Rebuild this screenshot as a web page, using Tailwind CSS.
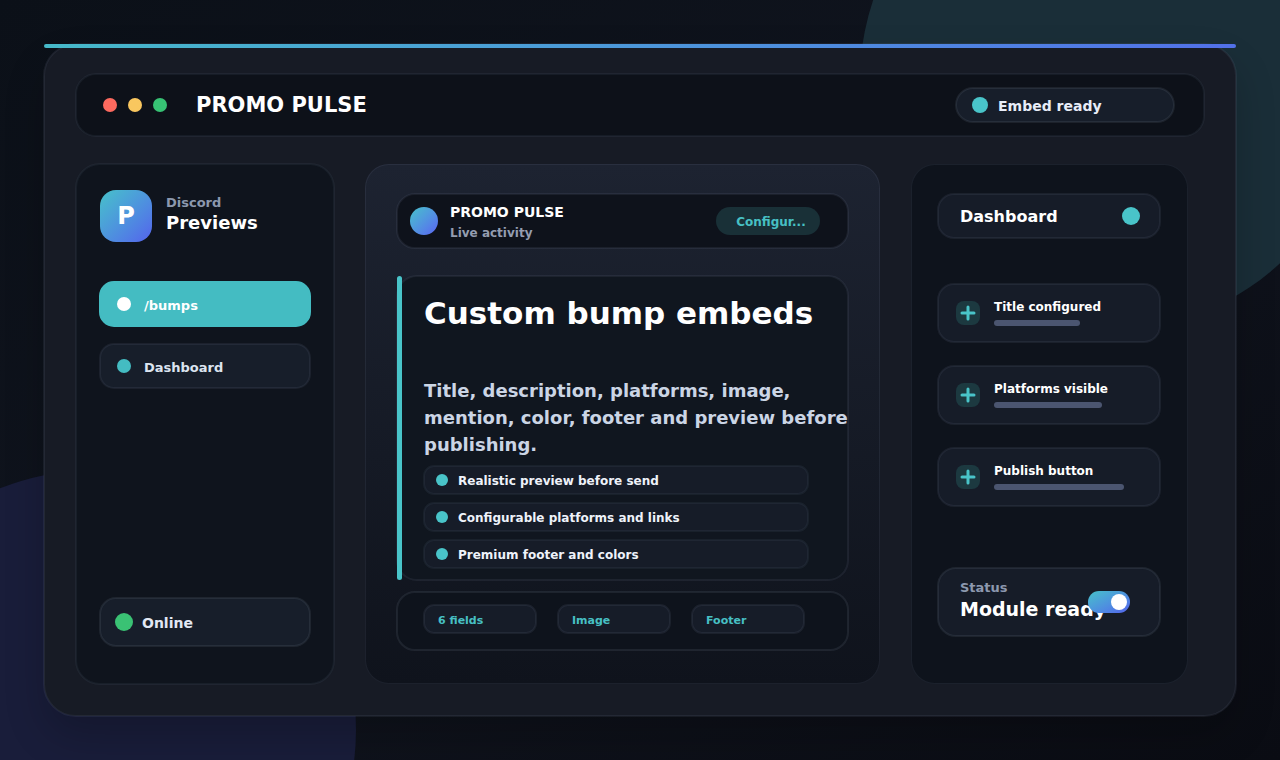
<!DOCTYPE html>
<html lang="en">
<head>
<meta charset="utf-8">
<meta name="viewport" content="width=device-width, initial-scale=1">
<title>Promo Pulse</title>
<script src="https://cdn.jsdelivr.net/npm/@tailwindcss/browser@4"></script>
</head>
<body class="relative min-h-screen bg-linear-to-br from-[#0b1018] via-[#10141e] to-[#0a0c13] p-11 font-['DejaVu_Sans',sans-serif] font-bold text-white">
  <!-- Backdrop discs -->
  <svg class="absolute inset-0 size-full" viewBox="0 0 1280 760" preserveAspectRatio="xMidYMid slice" aria-hidden="true">
    <circle cx="1110" cy="80" r="250" fill="#1a2e38"/>
    <circle cx="96" cy="730" r="260" fill="#191d3a"/>
  </svg>

  <main class="relative rounded-[32px] bg-[#171b25] px-8 pt-[30px] pb-8 shadow-[0_20px_40px_rgba(0,0,0,0.2)] outline-2 -outline-offset-1 outline-slate-400/10">
    <div class="absolute inset-x-0 top-0 h-1 rounded-full bg-linear-to-r from-[#46b9c9] to-[#5270e8]"></div>

    <header class="flex h-[62px] items-center rounded-[20px] bg-[#0d1119] pr-[30px] pl-[27px] outline-2 -outline-offset-1 outline-slate-400/8">
      <div class="flex gap-[11px]">
        <span class="size-3.5 rounded-full bg-[#fd6a5f]"></span>
        <span class="size-3.5 rounded-full bg-[#f9c75f]"></span>
        <span class="size-3.5 rounded-full bg-[#37c274]"></span>
      </div>
      <h1 class="ml-[29px] pt-0.5 text-[21px]">PROMO PULSE</h1>
      <div class="ml-auto flex h-[34px] w-[218px] items-center gap-2.5 rounded-full bg-[#171e2a] px-4 text-sm text-[#e8edf8] outline-2 -outline-offset-1 outline-slate-400/12">
        <span class="size-4 rounded-full bg-[#49c4c9]"></span><span class="pt-0.5">Embed ready</span>
      </div>
    </header>

    <div class="mt-7 mr-4 grid h-[520px] grid-cols-[258px_1fr_277px] gap-[31px]">
      <!-- Sidebar -->
      <aside class="flex flex-col rounded-3xl bg-[#0f141d] px-6 pt-[26px] pb-[38px] outline-2 -outline-offset-1 outline-slate-400/8">
        <div class="flex items-center gap-3.5">
          <div class="flex size-[52px] items-center justify-center rounded-2xl bg-linear-to-br from-[#47c1c9] to-[#5461ec] text-2xl">P</div>
          <div class="pb-1.5">
            <p class="text-[13px] leading-5 text-[#8c98ae]">Discord</p>
            <p class="text-lg leading-5">Previews</p>
          </div>
        </div>
        <nav class="mt-10 flex flex-col gap-[18px] text-[13px]">
          <a href="#bumps" class="flex h-11 items-center gap-[13px] rounded-[14px] bg-[#44bcc2] px-[17px] outline-2 -outline-offset-1 outline-[#44bcc2]"><span class="size-3.5 rounded-full bg-white"></span><span class="pt-1">/bumps</span></a>
          <a href="#dashboard" class="flex h-11 items-center gap-[13px] rounded-[14px] bg-[#171e2a] px-[17px] text-[#dce4f0] outline-2 -outline-offset-1 outline-slate-400/10"><span class="size-3.5 rounded-full bg-[#44bcc2]"></span><span class="pt-1">Dashboard</span></a>
        </nav>
        <div class="mt-auto flex h-12 items-center gap-[9px] rounded-2xl bg-[#171e2a] px-[15px] text-sm text-[#e2e8f4] outline-2 -outline-offset-1 outline-slate-400/12">
          <span class="size-[18px] rounded-full bg-[#3ac274]"></span><span class="pt-0.5">Online</span>
        </div>
      </aside>

      <!-- Embed preview -->
      <section class="rounded-3xl border border-slate-400/10 bg-linear-to-b from-[#1d2331] to-[#0f131c] bg-origin-border px-[31px] pt-[29px]">
        <div class="flex h-[54px] items-center rounded-[18px] bg-[#0e121b] pr-7 pl-[13px] outline-2 -outline-offset-1 outline-slate-400/10">
          <span class="size-7 rounded-full bg-linear-to-br from-[#47c1c9] to-[#5a61f2]"></span>
          <div class="ml-3 pt-1">
            <p class="text-sm leading-5">PROMO PULSE</p>
            <p class="text-xs leading-[22px] text-[#949db0]">Live activity</p>
          </div>
          <button class="ml-auto h-7 w-[104px] rounded-full bg-[#193037] pt-0.5 pl-1.5 text-xs text-[#47c0c4]">Configur...</button>
        </div>

        <article class="relative mt-7 h-[304px] rounded-[20px] bg-[#10161f] pt-[17px] pl-[27px] outline-2 -outline-offset-1 outline-slate-400/10">
          <div class="absolute inset-y-0 left-0 w-[5px] rounded-full bg-[#49c4c9]"></div>
          <h2 class="text-[31px] leading-10">Custom bump embeds</h2>
          <p class="mt-11 text-lg leading-[27px] whitespace-nowrap text-[#cbd5e5]">Title, description, platforms, image,<br>mention, color, footer and preview before<br>publishing.</p>
          <ul class="mt-2 mr-10 flex flex-col gap-[9px] text-xs text-[#eef2fa]">
            <li class="flex h-7 items-center gap-2.5 rounded-[10px] bg-[#161c28] px-3 outline-2 -outline-offset-1 outline-slate-400/8"><span class="size-3 rounded-full bg-[#49c4c9]"></span><span class="pt-0.5">Realistic preview before send</span></li>
            <li class="flex h-7 items-center gap-2.5 rounded-[10px] bg-[#161c28] px-3 outline-2 -outline-offset-1 outline-slate-400/8"><span class="size-3 rounded-full bg-[#49c4c9]"></span><span class="pt-0.5">Configurable platforms and links</span></li>
            <li class="flex h-7 items-center gap-2.5 rounded-[10px] bg-[#161c28] px-3 outline-2 -outline-offset-1 outline-slate-400/8"><span class="size-3 rounded-full bg-[#49c4c9]"></span><span class="pt-0.5">Premium footer and colors</span></li>
          </ul>
        </article>

        <div class="mt-3 flex h-[58px] gap-[22px] rounded-[18px] bg-[#0e131c] pt-[13px] pl-[27px] text-[11px] text-[#47c0c4] outline-2 -outline-offset-1 outline-slate-400/12">
          <span class="flex h-7 w-28 items-center rounded-[10px] bg-[#161c28] px-3.5 pt-1 outline-2 -outline-offset-1 outline-slate-400/10">6 fields</span>
          <span class="flex h-7 w-28 items-center rounded-[10px] bg-[#161c28] px-3.5 pt-1 outline-2 -outline-offset-1 outline-slate-400/10">Image</span>
          <span class="flex h-7 w-28 items-center rounded-[10px] bg-[#161c28] px-3.5 pt-1 outline-2 -outline-offset-1 outline-slate-400/10">Footer</span>
        </div>
      </section>

      <!-- Module checklist -->
      <aside class="flex flex-col rounded-3xl border border-slate-400/10 bg-[#0e131c] pt-[29px] pr-[27px] pb-[47px] pl-[26px]">
        <div class="flex h-11 items-center justify-between rounded-2xl bg-[#161c28] pr-5 pl-[22px] outline-2 -outline-offset-1 outline-slate-400/10">
          <h2 class="pt-0.5 text-base">Dashboard</h2>
          <span class="size-[18px] rounded-full bg-[#49c4c9]"></span>
        </div>
        <ul class="mt-[46px] flex flex-col gap-6 text-xs">
          <li class="flex h-[58px] items-center gap-3.5 rounded-2xl bg-[#161c28] px-[18px] outline-2 -outline-offset-1 outline-slate-400/10">
            <svg class="size-6 rounded-lg bg-[#1c3940]" viewBox="0 0 24 24" fill="none" stroke="#49c4c9" stroke-width="3" stroke-linecap="round"><path d="M12 6v12M6 12h12"/></svg>
            <div class="flex flex-col gap-[5px] pb-px"><span class="leading-4">Title configured</span><span class="h-1.5 w-[86px] rounded-full bg-[#4b5570]"></span></div>
          </li>
          <li class="flex h-[58px] items-center gap-3.5 rounded-2xl bg-[#161c28] px-[18px] outline-2 -outline-offset-1 outline-slate-400/10">
            <svg class="size-6 rounded-lg bg-[#1c3940]" viewBox="0 0 24 24" fill="none" stroke="#49c4c9" stroke-width="3" stroke-linecap="round"><path d="M12 6v12M6 12h12"/></svg>
            <div class="flex flex-col gap-[5px] pb-px"><span class="leading-4">Platforms visible</span><span class="h-1.5 w-[108px] rounded-full bg-[#4b5570]"></span></div>
          </li>
          <li class="flex h-[58px] items-center gap-3.5 rounded-2xl bg-[#161c28] px-[18px] outline-2 -outline-offset-1 outline-slate-400/10">
            <svg class="size-6 rounded-lg bg-[#1c3940]" viewBox="0 0 24 24" fill="none" stroke="#49c4c9" stroke-width="3" stroke-linecap="round"><path d="M12 6v12M6 12h12"/></svg>
            <div class="flex flex-col gap-[5px] pb-px"><span class="leading-4">Publish button</span><span class="h-1.5 w-[130px] rounded-full bg-[#4b5570]"></span></div>
          </li>
        </ul>
        <div class="relative mt-auto h-[68px] rounded-[18px] bg-[#161c28] px-[22px] pt-2.5 outline-2 -outline-offset-1 outline-slate-400/12">
          <p class="text-[13px] leading-5 text-[#8c98ae]">Status</p>
          <label for="module" class="block text-[19px] leading-[22px] whitespace-nowrap">Module ready</label>
          <input id="module" type="checkbox" role="switch" checked class="absolute top-[23px] right-[30px] h-[22px] w-[42px] appearance-none rounded-full bg-linear-to-br from-[#47c1c9] to-[#5461ec] after:absolute after:top-[3px] after:right-[3px] after:size-4 after:rounded-full after:bg-white">
        </div>
      </aside>
    </div>
  </main>
</body>
</html>
